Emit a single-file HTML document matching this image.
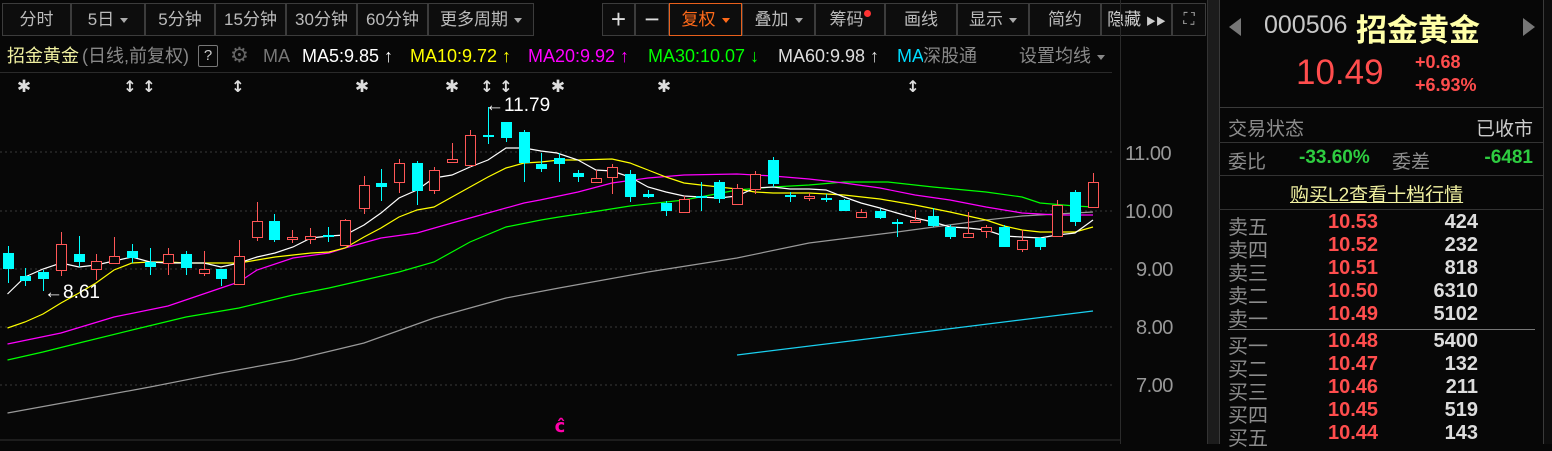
<!DOCTYPE html>
<html><head><meta charset="utf-8">
<style>
*{margin:0;padding:0;box-sizing:border-box}
body{width:1552px;height:444px;background:#070707;overflow:hidden;position:relative;font-family:"Liberation Sans","Noto Sans CJK SC",sans-serif;color:#aaa}
.a{position:absolute;white-space:nowrap}
.btn{position:absolute;top:3px;height:33px;border:1px solid #3c3c3c;background:#0d0d0d;color:#bbb;font-size:17px;line-height:31px;text-align:center}
.tri{display:inline-block;width:0;height:0;border-left:4px solid transparent;border-right:4px solid transparent;border-top:5px solid #aaa;vertical-align:middle;margin-left:6px}
.ma{position:absolute;top:44px;font-size:18px;line-height:24px;white-space:nowrap}
.r{position:absolute;font-size:18px;white-space:nowrap}
.ob{font-size:20px}
.lab{color:#8c8c8c;left:1228px}
.pr{color:#ff4d4d;font-weight:bold;left:1328px}
.vol{color:#ddd;font-weight:bold;right:74px;text-align:right}
.hl{position:absolute;height:1px;background:#333}
.ax{position:absolute;font-size:20px;color:#999;letter-spacing:-0.5px}
</style></head><body>

<div class="btn" style="left:2px;width:69px">分时</div>
<div class="btn" style="left:71px;width:74px">5日<span class="tri"></span></div>
<div class="btn" style="left:145px;width:70px">5分钟</div>
<div class="btn" style="left:215px;width:71px">15分钟</div>
<div class="btn" style="left:286px;width:71px">30分钟</div>
<div class="btn" style="left:357px;width:71px">60分钟</div>
<div class="btn" style="left:428px;width:106px">更多周期<span class="tri"></span></div>
<div class="btn" style="left:602px;width:33px;font-size:26px;color:#ddd">+</div>
<div class="btn" style="left:635px;width:34px;font-size:26px;color:#ddd">−</div>
<div class="btn" style="left:669px;width:73px;border-color:#e8601c;color:#ff6a1a">复权<span class="tri" style="border-top-color:#ff6a1a"></span></div>
<div class="btn" style="left:742px;width:73px">叠加<span class="tri"></span></div>
<div class="btn" style="left:815px;width:70px">筹码<span style="display:inline-block;width:7px;height:7px;border-radius:50%;background:#f33;vertical-align:top;margin-top:6px"></span></div>
<div class="btn" style="left:885px;width:72px">画线</div>
<div class="btn" style="left:957px;width:72px">显示<span class="tri"></span></div>
<div class="btn" style="left:1029px;width:72px">简约</div>
<div class="btn" style="left:1101px;width:71px;color:#ccc">隐藏 <span style="font-size:10px">▶▶</span></div>
<div class="btn" style="left:1172px;width:34px;font-size:16px;color:#aaa">⛶</div>

<div class="ma" style="left:7px;color:#f0f0a0">招金黄金</div>
<div class="ma" style="left:82px;color:#888">(日线,前复权)</div>
<div class="a" style="left:198px;top:45px;width:20px;height:22px;border:1px solid #777;border-radius:2px;color:#ccc;font-size:15px;text-align:center;line-height:20px">?</div>
<div class="ma" style="left:230px;color:#666;font-size:21px">⚙</div>
<div class="ma" style="left:263px;color:#777">MA</div>
<div class="ma" style="left:302px;color:#fff">MA5:9.85 ↑</div>
<div class="ma" style="left:410px;color:#ff0">MA10:9.72 ↑</div>
<div class="ma" style="left:528px;color:#f0f">MA20:9.92 ↑</div>
<div class="ma" style="left:648px;color:#0f0">MA30:10.07 ↓</div>
<div class="ma" style="left:778px;color:#ddd">MA60:9.98 ↑</div>
<div class="ma" style="left:897px;color:#0df;width:26px;overflow:hidden">MA12</div>
<div class="ma" style="left:923px;color:#888">深股通</div>
<div class="ma" style="left:1019px;color:#888">设置均线<span class="tri" style="border-top-color:#888"></span></div>
<div class="hl" style="left:0;top:72px;width:1112px;background:#2a2a2a"></div>

<svg id="ch" class="a" style="left:0;top:0" width="1207" height="444" xmlns="http://www.w3.org/2000/svg"></svg>

<div class="ax" style="left:1125px;top:143px">11.00</div>
<div class="ax" style="left:1125px;top:201px">10.00</div>
<div class="ax" style="left:1136px;top:259px">9.00</div>
<div class="ax" style="left:1136px;top:317px">8.00</div>
<div class="ax" style="left:1136px;top:375px">7.00</div>
<div class="a" style="left:1120px;top:0;width:1px;height:444px;background:#2a2a2a"></div>
<div class="a" style="left:1207px;top:0;width:12px;height:444px;background:#1c1c1c;border-left:1px solid #333"></div>
<div class="a" style="left:1219px;top:0;width:1px;height:444px;background:#3a3a3a"></div>
<div class="a" style="left:1543px;top:0;width:1px;height:444px;background:#3a3a3a"></div>
<div class="a" style="left:1544px;top:0;width:8px;height:444px;background:#0d0d0d"></div>

<div class="a" style="left:1229px;top:18px;width:0;height:0;border-top:9px solid transparent;border-bottom:9px solid transparent;border-right:12px solid #777"></div>
<div class="a" style="left:1523px;top:18px;width:0;height:0;border-top:9px solid transparent;border-bottom:9px solid transparent;border-left:12px solid #777"></div>
<div class="a" style="left:1264px;top:11px;font-size:25px;color:#c8c8c8">000506</div>
<div class="a" style="left:1356px;top:5px;font-size:31px;color:#ffffa8;font-weight:bold;font-family:'Noto Sans CJK SC',sans-serif">招金黄金</div>
<div class="a" style="left:1296px;top:53px;font-size:35px;color:#ff4d4d">10.49</div>
<div class="a" style="left:1415px;top:52px;font-size:18px;color:#ff4d4d;font-weight:bold">+0.68</div>
<div class="a" style="left:1415px;top:75px;font-size:18px;color:#ff4d4d;font-weight:bold">+6.93%</div>
<div class="hl" style="left:1219px;top:107px;width:324px;background:#3a3a3a"></div>
<div class="r lab" style="top:114px;font-size:19px">交易状态</div>
<div class="r" style="top:114px;right:19px;color:#ccc;font-size:19px">已收市</div>
<div class="hl" style="left:1219px;top:142px;width:324px"></div>
<div class="r lab" style="top:147px;font-size:19px">委比</div>
<div class="r" style="top:147px;left:1299px;color:#2ecc40;font-weight:bold;font-size:19px">-33.60%</div>
<div class="r" style="top:147px;left:1392px;color:#8c8c8c;font-size:19px">委差</div>
<div class="r" style="top:147px;right:19px;color:#2ecc40;font-weight:bold;font-size:19px">-6481</div>
<div class="hl" style="left:1219px;top:175px;width:324px"></div>
<div class="r" style="top:180px;left:1290px;color:#f0f0a0;text-decoration:underline;font-size:19px">购买L2查看十档行情</div>
<div class="hl" style="left:1219px;top:209px;width:324px"></div>

<div class="r ob lab" style="top:211px">卖五</div><div class="r ob pr" style="top:211px">10.53</div><div class="r ob vol" style="top:211px">424</div>
<div class="r ob lab" style="top:234px">卖四</div><div class="r ob pr" style="top:234px">10.52</div><div class="r ob vol" style="top:234px">232</div>
<div class="r ob lab" style="top:257px">卖三</div><div class="r ob pr" style="top:257px">10.51</div><div class="r ob vol" style="top:257px">818</div>
<div class="r ob lab" style="top:280px">卖二</div><div class="r ob pr" style="top:280px">10.50</div><div class="r ob vol" style="top:280px">6310</div>
<div class="r ob lab" style="top:303px">卖一</div><div class="r ob pr" style="top:303px">10.49</div><div class="r ob vol" style="top:303px">5102</div>
<div class="hl" style="left:1228px;top:329px;width:307px;background:#777"></div>
<div class="r ob lab" style="top:330px">买一</div><div class="r ob pr" style="top:330px">10.48</div><div class="r ob vol" style="top:330px">5400</div>
<div class="r ob lab" style="top:353px">买二</div><div class="r ob pr" style="top:353px">10.47</div><div class="r ob vol" style="top:353px">132</div>
<div class="r ob lab" style="top:376px">买三</div><div class="r ob pr" style="top:376px">10.46</div><div class="r ob vol" style="top:376px">211</div>
<div class="r ob lab" style="top:399px">买四</div><div class="r ob pr" style="top:399px">10.45</div><div class="r ob vol" style="top:399px">519</div>
<div class="r ob lab" style="top:422px">买五</div><div class="r ob pr" style="top:422px">10.44</div><div class="r ob vol" style="top:422px">143</div>

<script>
var s='';
[152,211,269,327,385].forEach(function(y){s+='<line x1="0" x2="1112" y1="'+y+'" y2="'+y+'" stroke="#3a3a3a" stroke-dasharray="2,3"/>';});
s+='<line x1="0" x2="1120" y1="440" y2="440" stroke="#333"/>';
function pl(c,p){s+='<polyline fill="none" stroke="'+c+'" stroke-width="1.2" points="'+p+'"/>';}
pl('#999','7.5,413 79,400 150,387 221,373 293,360 364,343 434,318 506,298 559,288 648,272 737,258 809,243 897,232 986,220 1022,216 1057,214 1093,212');
pl('#0f0','7.5,360 43,352 79,343 132,330 186,317 239,308 293,295 329,288 364,280 399,272 434,262 470,242 506,227 541,220 559,217 592,212 630,206 684,200 737,190 773,187 809,185 844,182 888,182 933,187 986,192 1022,197 1040,203 1075,206 1093,207');
pl('#f0f','7.5,344 61,333 114,317 168,306 221,288 239,282 257,270 293,258 329,253 345,248 381,238 417,233 452,223 488,213 524,203 540,200 578,192 612,183 648,178 684,175 737,174 773,176 809,179 844,183 880,188 915,195 950,200 986,207 1022,213 1057,215 1093,215');
pl('#ff0','7.5,328 25,322 43,314 61,303 79,293 96,283 114,270 132,263 150,262 168,262 186,263 204,263 221,263 239,263 257,260 275,257 293,255 311,253 329,252 345,248 364,237 381,228 399,217 417,210 434,207 452,197 470,187 488,177 506,168 524,163 541,162 559,160 578,160 612,159 630,163 648,170 666,177 684,183 701,185 719,187 737,189 755,192 773,193 809,193 844,195 880,199 915,205 950,212 986,220 1004,226 1022,230 1040,232 1075,232 1093,227');
pl('#fff','7.5,294 25,277 43,269 61,263 79,267 96,265 114,261 132,257 150,262 168,263 186,263 204,263 221,267 239,263 257,257 275,253 293,247 311,238 329,236 345,235 364,225 381,213 399,198 417,190 434,178 452,175 470,167 488,160 506,148 524,148 541,151 557,153 578,160 596,170 612,171 630,177 648,187 666,192 684,196 701,197 719,198 737,196 755,188 773,187 790,189 809,189 826,190 844,197 861,203 880,208 897,213 915,218 933,222 950,227 968,228 986,230 1004,236 1022,237 1040,238 1057,235 1075,233 1093,220');
pl('#1ad0f0','737,355 1093,311');
var C='c',R='r';
var d=[[7.5,253,269,246,283,C],[25,276,281,268,286,C],[43,272,279,270,291,C],[61,244,270,232,276,R],[79,254,262,236,267,C],[96,261,269,254,280,R],[114,256,263,237,263,R],[132,251,258,244,263,C],[150,262,267,248,275,C],[168,254,263,248,275,R],[186,254,268,251,275,C],[204,269,273,251,276,R],[221,269,279,269,286,C],[239,256,284,240,284,R],[257,221,237,202,241,R],[274,221,240,214,242,C],[292,237,239,230,243,R],[310,236,239,228,244,R],[328,235,237,227,242,C],[345,220,245,219,245,R],[364,185,208,176,214,R],[381,183,187,169,201,C],[399,163,182,159,193,R],[417,163,191,161,205,C],[434,170,190,167,194,R],[452,159,162,143,162,R],[470,135,165,130,167,R],[488,135,137,107,144,C],[506,122,138,122,142,C],[524,132,163,130,182,C],[541,164,169,153,172,C],[559,158,164,153,182,C],[578,173,177,170,182,C],[595.5,178,182,170,183,R],[612,167,177,164,194,R],[630,174,197,170,202,C],[648,194,197,190,198,C],[666,203,211,201,216,C],[684,199,212,196,212,R],[701,196,198,182,211,C],[719,182,199,180,203,C],[737,188,204,184,204,R],[755,174,189,171,194,R],[773,160,184,157,187,C],[790,195,197,192,202,C],[809,196,198,193,201,R],[826,198,200,194,202,C],[844,200,211,199,211,C],[861,212,217,209,217,R],[880,211,218,209,219,C],[897,222,224,219,237,C],[915,220,222,210,223,R],[933,216,226,208,227,C],[950,227,237,225,239,C],[968,233,237,212,237,R],[986,227,231,225,238,R],[1004,227,247,225,247,C],[1022,240,249,230,252,R],[1040,238,247,237,250,C],[1057,205,236,200,237,R],[1075,192,222,190,226,C],[1093,182,207,173,207,R]];
d.forEach(function(k){var x=Math.round(k[0]),col=k[5]==C?'#00ffff':'#ff5757';
s+='<line x1="'+(x+.5)+'" x2="'+(x+.5)+'" y1="'+k[3]+'" y2="'+k[4]+'" stroke="'+col+'"/>';
var h=Math.max(k[2]-k[1],1);
if(k[5]==C)s+='<rect x="'+(x-5)+'" y="'+k[1]+'" width="11" height="'+h+'" fill="'+col+'"/>';
else s+='<rect x="'+(x-4.5)+'" y="'+(k[1]+.5)+'" width="10" height="'+h+'" fill="#070707" stroke="'+col+'"/>';});
s+='<text x="485" y="111" fill="#fff" font-size="19" font-family="Liberation Sans">←11.79</text>';
s+='<text x="44" y="298" fill="#fff" font-size="19" font-family="Liberation Sans">←8.61</text>';
[24,362,452,558,664].forEach(function(x){s+='<text x="'+x+'" y="92" fill="#ddd" font-size="17" text-anchor="middle" font-family="DejaVu Sans">✱</text>';});
[130,149,238,487,506,913].forEach(function(x){s+='<text x="'+x+'" y="92" fill="#ddd" font-size="16" font-weight="bold" text-anchor="middle" font-family="DejaVu Sans">↕</text>';});
s+='<text x="560" y="432" fill="#f0a" font-size="18" font-weight="bold" text-anchor="middle" font-family="DejaVu Sans">ĉ</text>';
document.getElementById('ch').innerHTML=s;
</script>
</body></html>
